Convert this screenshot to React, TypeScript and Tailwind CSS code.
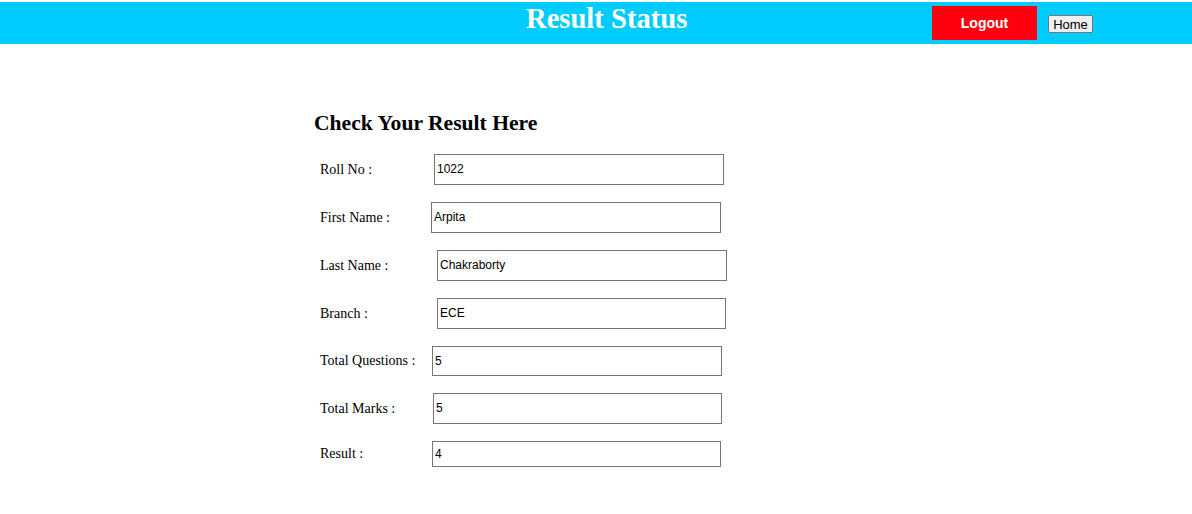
const rows = [
    { label: "Roll No :", value: "1022", labelW: "w-[114px]", h: "h-[31px]", w: "w-[290px]" },
    { label: "First Name :", value: "Arpita", labelW: "w-[111px]", h: "h-[31px]", w: "w-[290px]" },
    { label: "Last Name :", value: "Chakraborty", labelW: "w-[117px]", h: "h-[31px]", w: "w-[290px]" },
    { label: "Branch :", value: "ECE", labelW: "w-[117px]", h: "h-[31px]", w: "w-[289px]" },
    { label: "Total Questions :", value: "5", labelW: "w-[112px]", h: "h-[30px]", w: "w-[290px]" },
    { label: "Total Marks :", value: "5", labelW: "w-[113px]", h: "h-[31px]", w: "w-[289px]" },
    { label: "Result :", value: "4", labelW: "w-[112px]", h: "h-[26px]", w: "w-[289px]" },
];

const App = () => {
    return (
        <div className="min-h-[514px] w-full bg-white font-['Liberation_Serif',serif] text-black">
            <header className="mt-[2px] flex h-[42px] items-start bg-[#00ccff]">
                <h1 className="ml-[526px] w-[162px] whitespace-nowrap text-[28.6px] font-bold leading-[33px] text-white">
                    Result Status
                </h1>
                <a className="ml-[244px] mt-[4px] flex h-[34px] w-[105px] items-center justify-center bg-[#ff0010] font-['Liberation_Sans',sans-serif] text-[14px] font-bold text-white">
                    Logout
                </a>
                <button className="ml-[11px] mt-[13px] flex h-[18px] w-[45px] items-center justify-center rounded-[2px] border border-[#767676] bg-[#efefef] font-['Liberation_Sans',sans-serif] text-[13px] leading-none text-black">
                    Home
                </button>
            </header>

            <main className="ml-[314px] mt-[67px]">
                <h3 className="text-[21.6px] font-bold leading-[25px]">Check Your Result Here</h3>
                <div className="ml-[6px] mt-[18px] flex flex-col gap-[17px]">
                    {rows.map((row) => (
                        <div key={row.label} className={"flex items-center " + row.h}>
                            <label className={"-mt-[1px] whitespace-nowrap text-[14px] " + row.labelW}>{row.label}</label>
                            <input
                                readOnly
                                value={row.value}
                                className={"border border-[#767676] bg-white px-[2px] pb-[1px] font-['Liberation_Sans',sans-serif] text-[12px] text-black outline-none " + row.h + " " + row.w}
                            />
                        </div>
                    ))}
                </div>
            </main>
        </div>
    );
};

export default App;
